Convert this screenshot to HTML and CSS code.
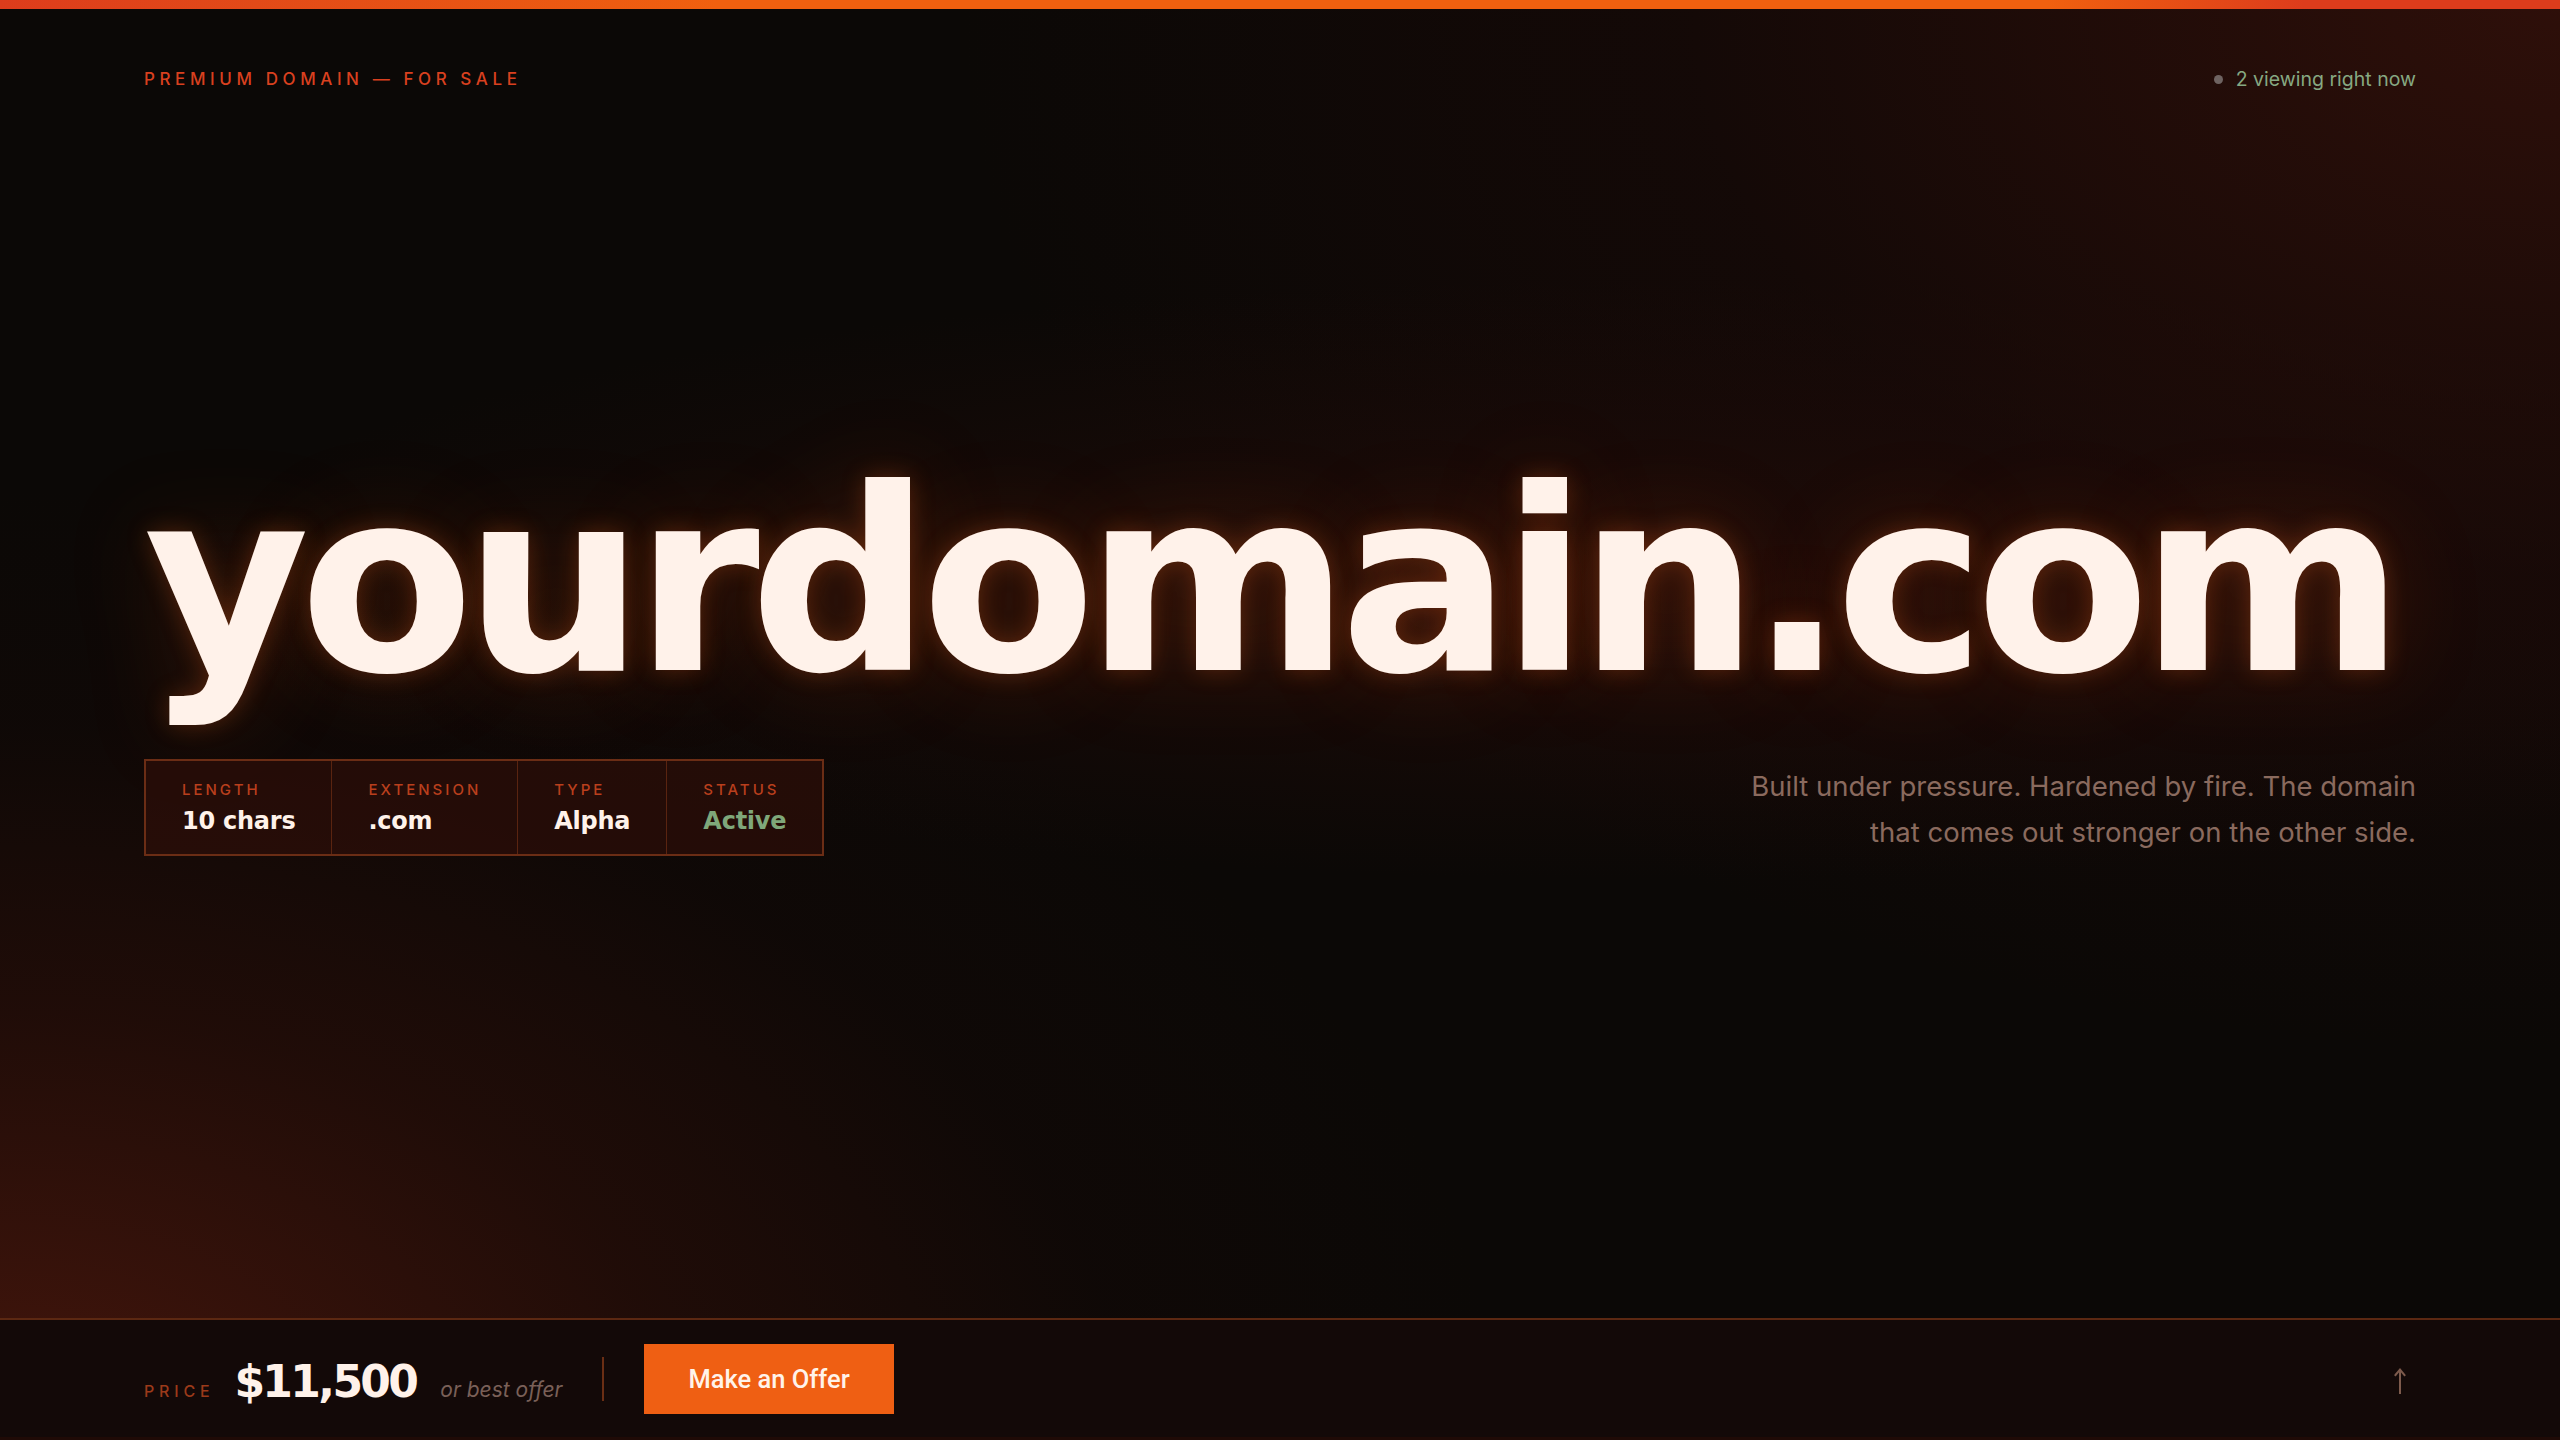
FILE: index.html
```html
<!DOCTYPE html>
<html lang="en">
<head>
<meta charset="utf-8">
<title>yourdomain.com — Premium Domain For Sale</title>
<link rel="stylesheet" href="styles.css">
</head>
<body>
<div class="topbar"></div>
<header class="header">
  <div class="eyebrow">PREMIUM DOMAIN — FOR SALE</div>
  <div class="viewing"><span class="dot"></span><span>2 viewing right now</span></div>
</header>
<main class="hero">
  <h1 class="domain">yourdomain.com</h1>
  <div class="meta-row">
    <div class="meta">
      <div class="cell"><div class="label">LENGTH</div><div class="value">10 chars</div></div>
      <div class="cell"><div class="label">EXTENSION</div><div class="value">.com</div></div>
      <div class="cell"><div class="label">TYPE</div><div class="value">Alpha</div></div>
      <div class="cell"><div class="label">STATUS</div><div class="value active">Active</div></div>
    </div>
    <p class="desc">Built under pressure. Hardened by fire. The domain that comes out stronger on the other side.</p>
  </div>
</main>
<footer class="footer">
  <div class="price-group">
    <div class="price-text">
      <span class="price-label">PRICE</span>
      <span class="price">$11,500</span>
      <span class="obo">or best offer</span>
    </div>
    <span class="vdiv"></span>
    <button class="offer">Make an Offer</button>
  </div>
  <div class="up" aria-label="Back to top">
    <svg width="14" height="28" viewBox="0 0 14 28" fill="none" stroke="#7d5a4c" stroke-width="2" stroke-linecap="square">
      <path d="M7 3 L7 26"/>
      <path d="M2.5 8 L7 2.5 L11.5 8"/>
    </svg>
  </div>
</footer>
</body>
</html>
```
FILE: styles.css
```css
* { box-sizing: border-box; }
html, body { margin: 0; padding: 0; }
body {
  width: 2560px;
  height: 1440px;
  overflow: hidden;
  display: flex;
  flex-direction: column;
  font-family: "Inter", "Noto Sans", sans-serif;
  background:
    radial-gradient(ellipse 1500px 950px at 0% 100%, rgba(70, 22, 12, 1), rgba(46, 15, 9, 0.6) 45%, rgba(30, 10, 8, 0.2) 75%, transparent 100%),
    radial-gradient(ellipse 1600px 1050px at 100% 0%, rgba(50, 16, 10, 0.9), rgba(30, 10, 8, 0.45) 55%, transparent 100%),
    radial-gradient(ellipse 1500px 300px at 65% 580px, rgba(48, 15, 10, 0.5), transparent 100%),
    #0b0806;
}
.topbar {
  height: 9px;
  flex: none;
  background: linear-gradient(90deg, #dd3c1c 0%, #e24a18 10%, #f0600f 28%, #f0600f 80%, #dd3c1c 90%, #dd3c1c 100%);
}
.header {
  flex: none;
  display: flex;
  justify-content: space-between;
  align-items: center;
  padding: 58px 144px 0;
  height: 82px;
}
.eyebrow {
  font-size: 17px;
  font-weight: 500;
  letter-spacing: 0.27em;
  color: #d9401f;
  line-height: 24px;
}
.viewing {
  display: flex;
  align-items: center;
  gap: 13px;
  font-size: 19.5px;
  color: #86a882;
  line-height: 24px;
}
.dot {
  width: 9px;
  height: 9px;
  border-radius: 50%;
  background: #6e6361;
}
.hero {
  flex: 1;
  padding: 0 144px;
  display: flex;
  flex-direction: column;
}
.domain {
  margin: 364px 0 0;
  font-family: "DejaVu Sans", "Liberation Sans", sans-serif;
  font-weight: 700;
  font-size: 254px;
  line-height: 1;
  letter-spacing: -0.04em;
  color: #fff2ea;
  white-space: nowrap;
  text-shadow: 0 0 24px rgba(240, 100, 30, 0.28), 0 0 100px rgba(230, 80, 20, 0.2);
}
.meta-row {
  margin-top: 50px;
  display: flex;
  justify-content: space-between;
  align-items: flex-start;
}
.meta {
  display: flex;
  border: 2px solid #6b2d15;
  background: rgba(46, 14, 8, 0.7);
}
.cell {
  padding: 20px 36px 19px;
  border-left: 1px solid #5a2410;
}
.cell:first-child { border-left: none; }
.label {
  font-size: 15px;
  font-weight: 500;
  letter-spacing: 0.2em;
  line-height: 18px;
  color: #b93f1d;
  margin-bottom: 8px;
}
.value {
  font-family: "DejaVu Sans", "Liberation Sans", sans-serif;
  font-weight: 700;
  font-size: 24px;
  line-height: 28px;
  color: #fff2ea;
  letter-spacing: -0.01em;
}
.value.active { color: #7fa87a; }
.desc {
  margin: 4px 0 0;
  max-width: 720px;
  text-align: right;
  font-size: 27.5px;
  font-weight: 400;
  line-height: 46px;
  color: #8a6a5e;
}
.footer {
  flex: none;
  height: 122px;
  border-top: 2px solid #5c2812;
  border-bottom: 3px solid #1f0a06;
  background: #130908;
  padding: 0 144px;
  display: flex;
  align-items: center;
  justify-content: space-between;
}
.price-group {
  display: flex;
  align-items: center;
}
.price-text {
  display: flex;
  align-items: baseline;
  margin-top: 6px;
  margin-right: 40px;
}
.price-label {
  font-size: 16px;
  font-weight: 500;
  letter-spacing: 0.3em;
  color: #9c3a1a;
  margin-right: 20px;
}
.price {
  font-family: "DejaVu Sans", "Liberation Sans", sans-serif;
  font-weight: 700;
  font-size: 44px;
  letter-spacing: -0.06em;
  color: #fff2ea;
  margin-right: 24px;
}
.obo {
  font-size: 21px;
  font-style: italic;
  color: #7a6058;
}
.vdiv {
  width: 2px;
  height: 44px;
  background: #6b2e14;
  margin-right: 40px;
}
.offer {
  height: 70px;
  padding: 0 44px;
  border: none;
  border-radius: 0;
  background: #ef5f13;
  color: #fff3ea;
  font-family: "Roboto", "Inter", sans-serif;
  font-weight: 500;
  font-size: 25.5px;
  cursor: pointer;
}
.up {
  display: flex;
  align-items: center;
  margin-right: 9px;
  margin-top: 4px;
}
.up svg { display: block; }
```
